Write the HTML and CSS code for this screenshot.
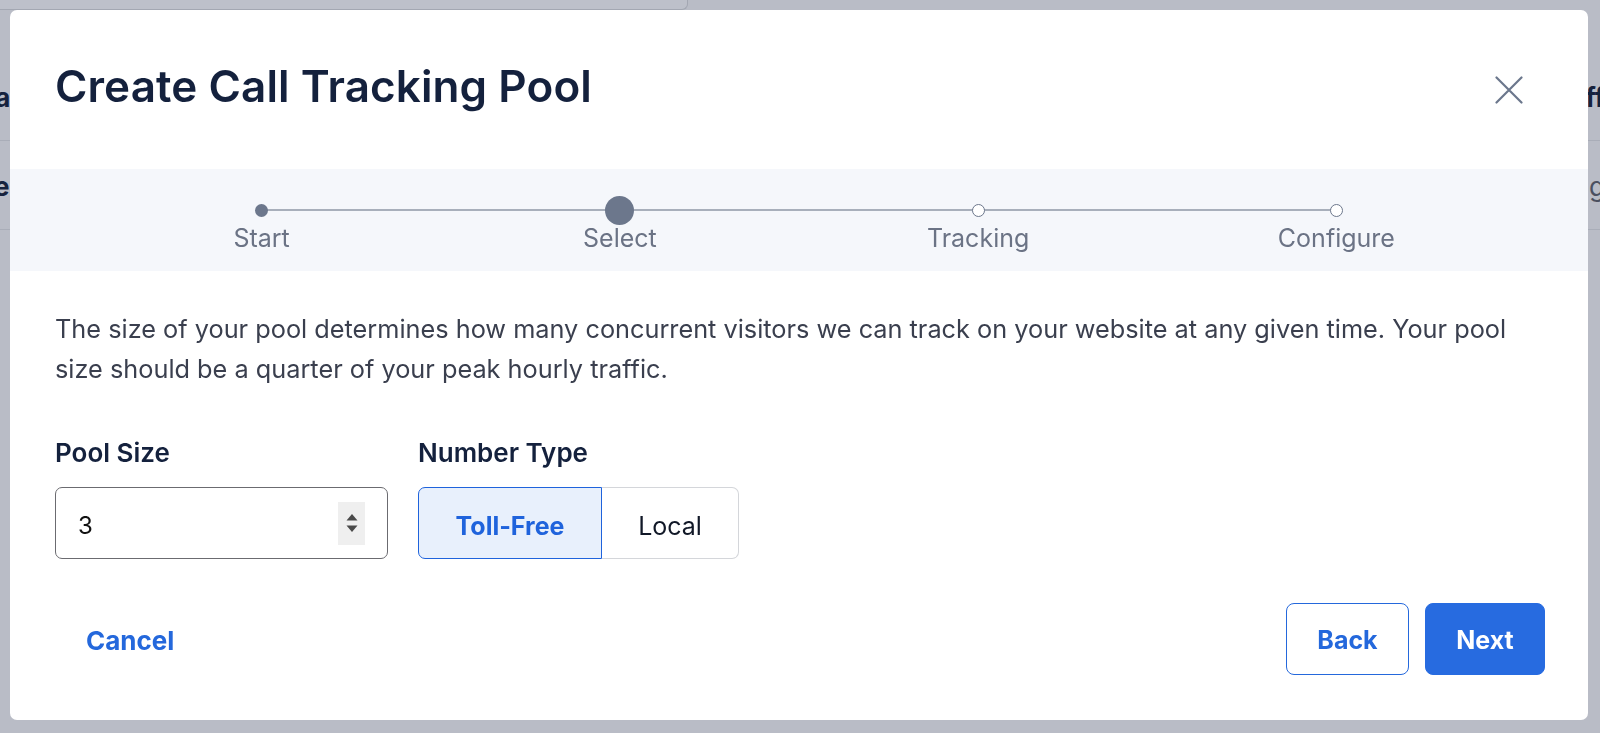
FILE: index.html
```html
<!DOCTYPE html>
<html lang="en">
<head>
<meta charset="utf-8">
<title>Create Call Tracking Pool</title>
<link rel="stylesheet" href="styles.css">
</head>
<body>
<div class="page">
  <div class="bg-top"></div>
  <div class="bg-row bg-row-head">
    <span class="bg-left bg-left-1 strong">Ca</span>
    <span class="bg-right bg-right-1 strong">ff</span>
  </div>
  <div class="bg-row bg-row-2">
    <span class="bg-left bg-left-2 strong">e</span>
    <span class="bg-right bg-right-2">g</span>
  </div>
</div>

<div class="overlay">
  <div class="modal" role="dialog" aria-labelledby="modal-title">
    <header class="modal-header">
      <h1 id="modal-title" class="modal-title">Create Call Tracking Pool</h1>
      <button class="close-btn" aria-label="Close">
        <svg width="28" height="28" viewBox="0 0 28 28" fill="none" stroke="#6b778c" stroke-width="2.2" stroke-linecap="round">
          <path d="M1.5 1.5 L26.5 26.5 M26.5 1.5 L1.5 26.5"/>
        </svg>
      </button>
    </header>

    <div class="stepper">
      <div class="stepper-line"></div>
      <div class="step done">
        <span class="dot-wrap"><span class="dot"></span></span>
        <span class="step-label">Start</span>
      </div>
      <div class="step current">
        <span class="dot-wrap"><span class="dot"></span></span>
        <span class="step-label">Select</span>
      </div>
      <div class="step todo">
        <span class="dot-wrap"><span class="dot"></span></span>
        <span class="step-label">Tracking</span>
      </div>
      <div class="step todo">
        <span class="dot-wrap"><span class="dot"></span></span>
        <span class="step-label">Configure</span>
      </div>
    </div>

    <div class="modal-body">
      <p class="desc">The size of your pool determines how many concurrent visitors we can track on your website at any given time. Your pool size should be a quarter of your peak hourly traffic.</p>

      <div class="fields">
        <div class="field field-size">
          <label class="field-label" for="pool-size">Pool Size</label>
          <div class="num-input">
            <input id="pool-size" type="text" value="3">
            <span class="spinner">
              <svg width="14" height="28" viewBox="0 0 14 28" fill="#4a4a4a">
                <path d="M7 5 L12.5 11.5 L1.5 11.5 Z"/>
                <path d="M1.5 16.5 L12.5 16.5 L7 23 Z"/>
              </svg>
            </span>
          </div>
        </div>
        <div class="field">
          <span class="field-label">Number Type</span>
          <div class="segmented">
            <button class="seg seg-active">Toll-Free</button>
            <button class="seg seg-local">Local</button>
          </div>
        </div>
      </div>
    </div>

    <footer class="modal-footer">
      <button class="btn-link">Cancel</button>
      <div class="footer-actions">
        <button class="btn btn-outline">Back</button>
        <button class="btn btn-primary">Next</button>
      </div>
    </footer>
  </div>
</div>
</body>
</html>
```

FILE: styles.css
```css
* { box-sizing: border-box; }

html, body {
  margin: 0;
  height: 100%;
}

body {
  background: #b9bcc6;
  font-family: Inter, "Noto Sans", "Liberation Sans", sans-serif;
  overflow: hidden;
}

/* background app (dimmed) */
.page {
  width: 1600px;
}

.bg-top {
  width: 688px;
  height: 10px;
  background: #bdc0ca;
  border-right: 1px solid #a3a7b2;
  border-bottom: 1px solid #a3a7b2;
  border-bottom-right-radius: 6px;
}

.bg-row {
  display: flex;
  justify-content: space-between;
  align-items: flex-start;
  border-bottom: 1px solid #a9adb8;
  font-size: 26px;
  line-height: 32px;
  color: #4b5060;
}

.bg-row-head {
  height: 131px;
  padding-top: 72px;
}

.bg-row-2 {
  height: 89px;
  padding-top: 30px;
}

.bg-left-1 { margin-left: -24px; }
.bg-left-2 { margin-left: -6px; }
.bg-right-1 { margin-right: -5px; }
.bg-right-2 { margin-right: -5px; }
.strong { font-weight: 700; color: #16223d; }

/* overlay + modal */
.overlay {
  position: fixed;
  inset: 0;
}

.modal {
  position: absolute;
  left: 10px;
  top: 10px;
  width: 1578px;
  height: 710px;
  background: #ffffff;
  border-radius: 7px;
  display: flex;
  flex-direction: column;
  overflow: hidden;
}

.modal-header {
  flex: none;
  height: 159px;
  padding: 0 65px 0 45px;
  display: flex;
  align-items: center;
  justify-content: space-between;
}

.modal-title {
  margin: 0 0 8px 0;
  font-size: 44px;
  font-weight: 600;
  color: #14213d;
  letter-spacing: 0.1px;
}

.close-btn {
  background: none;
  border: 0;
  padding: 0;
  width: 28px;
  height: 28px;
  display: flex;
  cursor: pointer;
}

/* stepper */
.stepper {
  flex: none;
  position: relative;
  height: 102px;
  background: #f5f7fb;
  padding: 0 72.5px;
  display: grid;
  grid-template-columns: repeat(4, 1fr);
}

.stepper-line {
  position: absolute;
  left: calc(72.5px + (100% - 145px) / 8);
  right: calc(72.5px + (100% - 145px) / 8);
  top: 40px;
  height: 1.6px;
  background: #a8afbb;
}

.step {
  position: relative;
  display: flex;
  flex-direction: column;
  align-items: center;
  padding-top: 26px;
}

.dot-wrap {
  height: 30px;
  width: 30px;
  display: flex;
  align-items: center;
  justify-content: center;
}

.dot {
  display: block;
  border-radius: 50%;
}

.done .dot {
  width: 13px;
  height: 13px;
  background: #6c778c;
}

.current .dot {
  width: 29px;
  height: 29px;
  background: #6c778c;
}

.todo .dot {
  width: 13px;
  height: 13px;
  background: #ffffff;
  border: 1.5px solid #6c778c;
}

.step-label {
  margin-top: -2px;
  font-size: 25px;
  line-height: 30px;
  color: #6b7385;
}

/* body */
.modal-body {
  flex: none;
  padding: 38px 43px 0 45px;
}

.desc {
  margin: 0;
  font-size: 25.3px;
  line-height: 40px;
  color: #3a3f4e;
}

.fields {
  margin-top: 48px;
  display: flex;
  gap: 30px;
}

.field {
  display: flex;
  flex-direction: column;
  gap: 18px;
}

.field-size { width: 333px; }

.field-label {
  font-size: 26px;
  line-height: 32px;
  font-weight: 600;
  color: #14213d;
}

.num-input {
  position: relative;
  height: 72px;
  border: 1.5px solid #6b6b70;
  border-radius: 7px;
  display: flex;
  align-items: center;
  padding: 0 22px 0 22px;
}

.num-input input {
  flex: 1;
  border: 0;
  outline: none;
  background: transparent;
  font-family: Inter, "Noto Sans", "Liberation Sans", sans-serif;
  font-size: 24px;
  color: #111111;
  padding: 5px 0 0 0;
  min-width: 0;
}

.spinner {
  width: 27px;
  height: 43px;
  background: #efefef;
  display: flex;
  align-items: center;
  justify-content: center;
}

.segmented {
  display: flex;
  height: 72px;
}

.seg {
  font-family: Inter, "Noto Sans", "Liberation Sans", sans-serif;
  font-size: 25px;
  height: 72px;
  padding: 5px 0 0 0;
  cursor: pointer;
}

.seg-active {
  width: 184px;
  background: #e8f0fc;
  border: 1.5px solid #1f63dc;
  border-radius: 7px 0 0 7px;
  color: #1f63dc;
  font-weight: 700;
}

.seg-local {
  width: 137px;
  background: #ffffff;
  border: 1.5px solid #d4d6da;
  border-left: 0;
  border-radius: 0 7px 7px 0;
  color: #111827;
  font-weight: 400;
}

/* footer */
.modal-footer {
  flex: none;
  margin-top: 44px;
  padding: 0 43px 0 45px;
  display: flex;
  justify-content: space-between;
  align-items: center;
}

.btn-link {
  background: none;
  border: 0;
  padding: 2px 0 0 31px;
  font-family: Inter, "Noto Sans", "Liberation Sans", sans-serif;
  font-size: 26px;
  font-weight: 700;
  color: #2468dc;
  cursor: pointer;
}

.footer-actions {
  display: flex;
  gap: 16px;
}

.btn {
  height: 72px;
  padding: 2px 0 0 0;
  border-radius: 8px;
  font-family: Inter, "Noto Sans", "Liberation Sans", sans-serif;
  font-size: 25px;
  font-weight: 700;
  cursor: pointer;
}

.btn-outline {
  width: 123px;
  background: #ffffff;
  border: 1.5px solid #2468dc;
  color: #2468dc;
}

.btn-primary {
  width: 120px;
  background: #276be0;
  border: 1.5px solid #276be0;
  color: #ffffff;
}
```
